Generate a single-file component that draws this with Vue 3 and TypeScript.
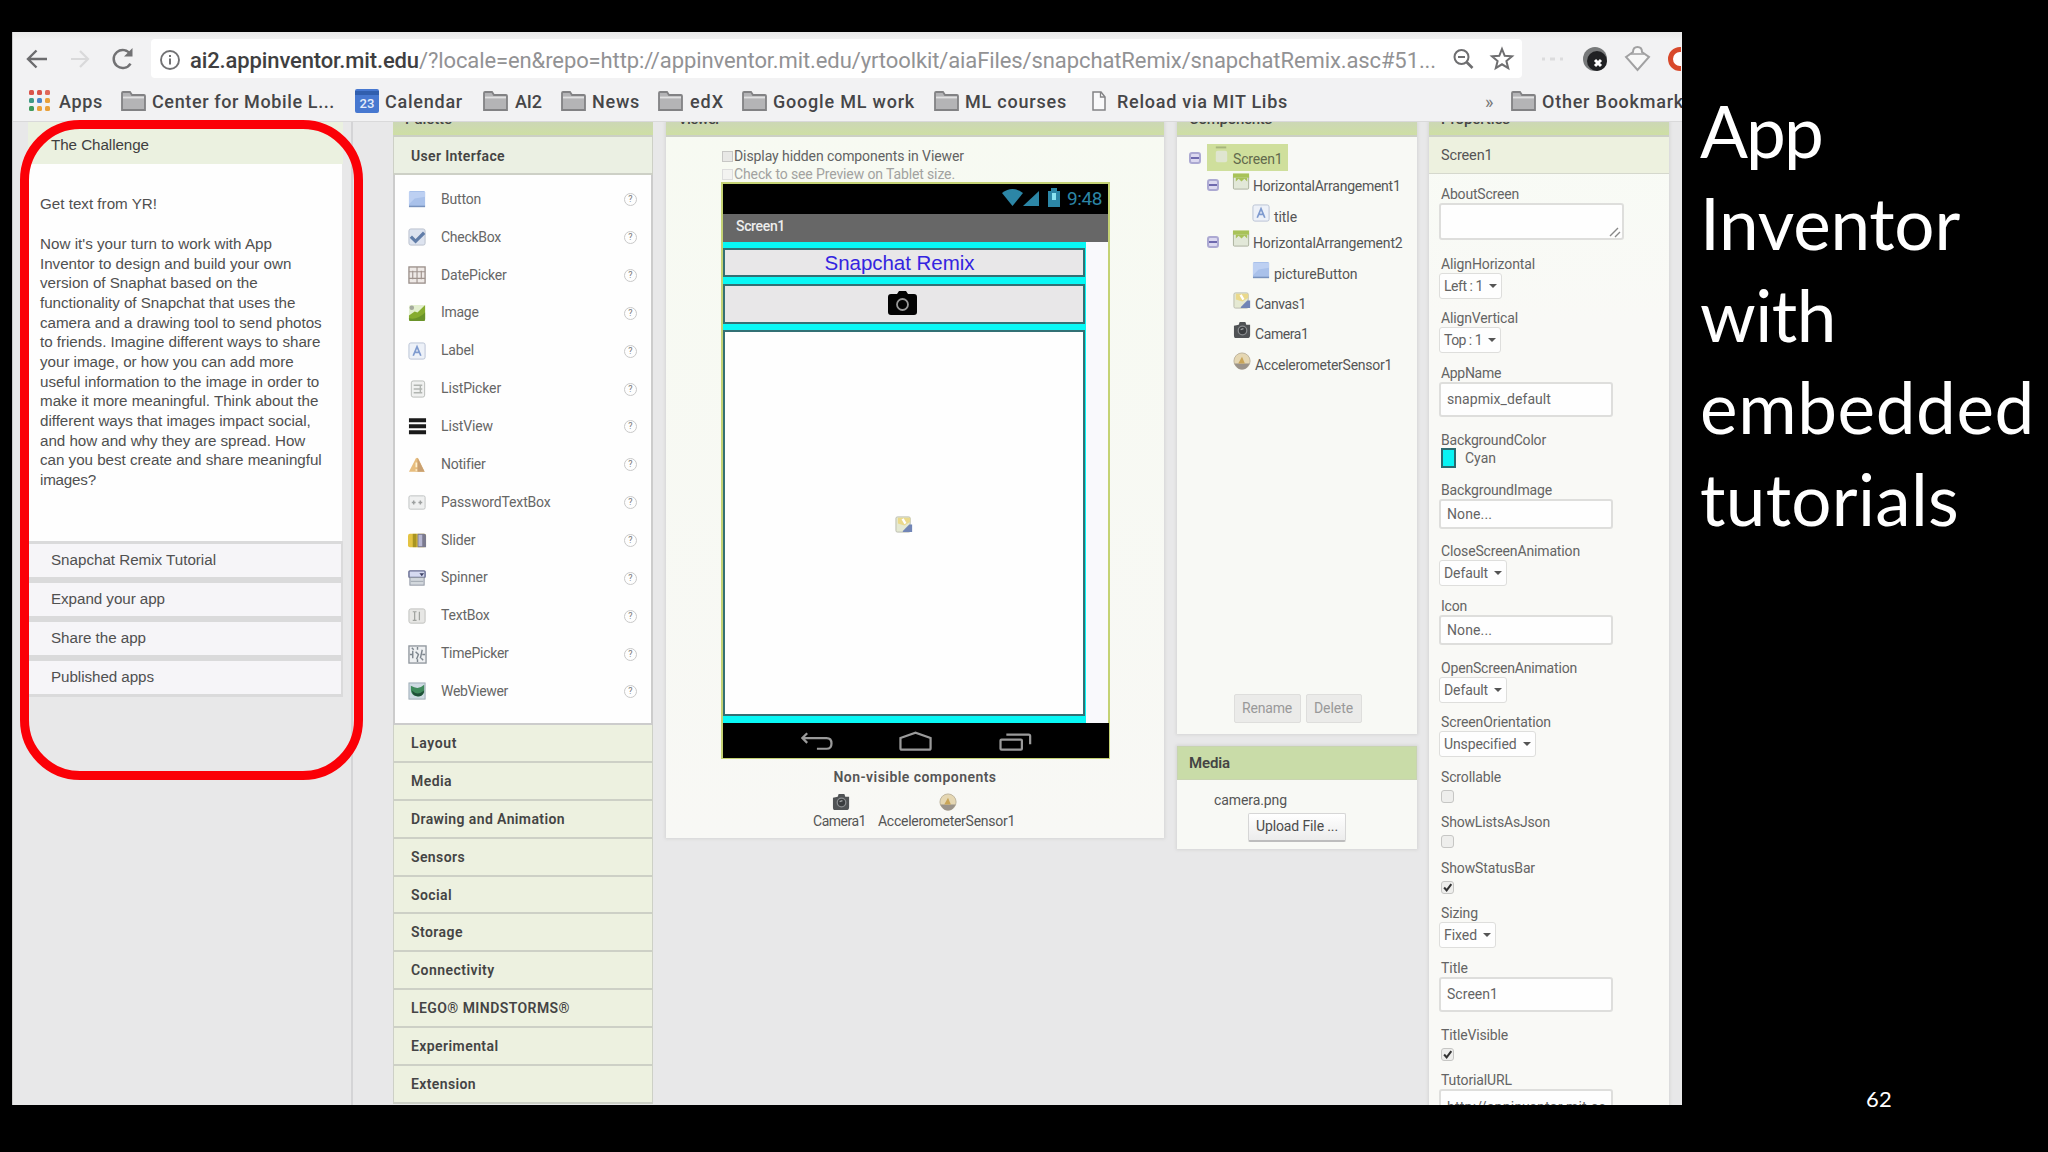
<script setup lang="ts">
import type { Directive } from 'vue'

// Tracks a line of text so that it spans the given number of pixels.
const vFit: Directive<HTMLElement, number> = {
  mounted(el, { value }) {
    const range = document.createRange()
    range.selectNodeContents(el)
    const natural = range.getBoundingClientRect().width
    const count = (el.textContent ?? '').trim().length
    if (value && count) el.style.letterSpacing = `${((value - natural) / count).toFixed(3)}px`
  },
}

interface Bookmark { label: string; kind: 'apps' | 'folder' | 'calendar' | 'page'; x: number; text: number; w: number }
const bookmarks: Bookmark[] = [
  { label: 'Apps', kind: 'apps', x: 16, text: 30, w: 44 },
  { label: 'Center for Mobile L...', kind: 'folder', x: 18, text: 31, w: 183 },
  { label: 'Calendar', kind: 'calendar', x: 20, text: 30, w: 78 },
  { label: 'AI2', kind: 'folder', x: 20, text: 32, w: 27 },
  { label: 'News', kind: 'folder', x: 19, text: 31, w: 48 },
  { label: 'edX', kind: 'folder', x: 18, text: 32, w: 34 },
  { label: 'Google ML work', kind: 'folder', x: 18, text: 31, w: 142 },
  { label: 'ML courses', kind: 'folder', x: 19, text: 31, w: 102 },
  { label: 'Reload via MIT Libs', kind: 'page', x: 25, text: 25, w: 171 },
]
const appDots = ['#d9534a', '#d9534a', '#e0685a', '#3f9a86', '#4a86c8', '#e9a13b', '#3f9a5c', '#e9a13b', '#e9a13b']

const story: [string, number][] = [
  ["Now it's your turn to work with App", 232], ['Inventor to design and build your own', 251.3],
  ['version of Snaphat based on the', 217.7], ['functionality of Snapchat that uses the', 255.3],
  ['camera and a drawing tool to send photos', 281.7], ['to friends. Imagine different ways to share', 280.3],
  ['your image, or how you can add more', 253.7], ['useful information to the image in order to', 279.3],
  ['make it more meaningful. Think about the', 278.3], ['different ways that images impact social,', 270.7],
  ['and how and why they are spread. How', 265.3], ['can you best create and share meaningful', 281.7],
  ['images?', 56],
]
const steps: [string, number][] = [
  ['Snapchat Remix Tutorial', 165], ['Expand your app', 114], ['Share the app', 95], ['Published apps', 103],
]

const icons: Record<string, string> = {
  button: '<rect x="1" y="1" width="17" height="17" rx="1.5" fill="#a9c1ea"/><path d="M1 2h17v5L7 9 1 15z" fill="#bdd0f2"/><path d="M1 17.3h17" stroke="#7892bd" stroke-width="1.6"/>',
  checkbox: '<rect x="1" y="1" width="17" height="17" rx="2" fill="#dde3ef" stroke="#b9c0cc"/><path d="M3 9l5 5 9-9" fill="none" stroke="#617da8" stroke-width="3.4"/>',
  date: '<rect x="1" y="1" width="17" height="17" fill="#eee9e6" stroke="#9a8f8a" stroke-width="1.4"/><path d="M9.5 1v17M1 6h17M1 13h17M5 5v9M14 5v9" stroke="#a0948e" stroke-width="1.2"/>',
  image: '<rect x="1" y="1" width="17" height="17" rx="2" fill="#e3efcf"/><path d="M1 12l6-4 3 1 8-8v15q0 2-2 2H3q-2 0-2-2z" fill="#86ac2f"/><path d="M1 15q9 2 17-6v7q0 2-2 2H3q-2 0-2-2z" fill="#6a932a"/><circle cx="4" cy="4" r="2.4" fill="#a4a99c"/>',
  label: '<rect x="1" y="1" width="17" height="17" rx="2" fill="#edf1f8" stroke="#b8c2d4"/><path d="M5.5 14.500L9.500 5l4 9.500M7 11h5" fill="none" stroke="#7f9bcf" stroke-width="1.8"/>',
  listpicker: '<rect x="3.500" y="1" width="14" height="17" rx="2" fill="#f0f1f0" stroke="#b7bab7"/><path d="M6 5.500h9M6 9.500h9M6 13.500h9M13 5v9" stroke="#b1b5b1" stroke-width="1.5"/>',
  listview: '<path d="M1 3.500h18M1 9.800h18M1 16h18" stroke="#1a1a1a" stroke-width="4.200"/>',
  notifier: '<path d="M9.500 3Q11 3 12 6l5.500 11.500H1L7 6q1-3 2.500-3z" fill="#e7bd7e"/><path d="M10 3l7.500 14.500H10z" fill="#c9a071"/><path d="M8.800 8v5M8.800 15v1.500" stroke="#fff1cf" stroke-width="1.800"/>',
  password: '<rect x="1" y="3" width="17" height="14" rx="1.500" fill="#eff0f0" stroke="#bfc2c2"/><path d="M4 10h4M11 10h4M6 8v4M13 8v4" stroke="#9da0a0" stroke-width="1.500"/>',
  slider: '<rect x="0" y="3" width="19" height="14" rx="2" fill="#e4c343"/><path d="M5 3h4v14H5z" fill="#a99421"/><path d="M10 3h7q2 0 2 2v12h-9z" fill="#7b7a8e"/><path d="M11 4h4v12h-4z" fill="#b7b7d2"/>',
  spinner: '<rect x="1" y="2" width="17" height="7" rx="1" fill="#d6daf0" stroke="#666b91" stroke-width="1.500"/><rect x="2" y="9" width="15" height="8" fill="#d3d8dd" stroke="#8e95a2"/><path d="M12 4.500h5l-2.500 3z" fill="#3e4366"/><path d="M3 13h13" stroke="#9da4ad"/>',
  textbox: '<rect x="1" y="2" width="17" height="15" rx="2" fill="#e7e7e5" stroke="#bfc0bd"/><path d="M5 5h4M7 5v9M5 14h4M12 5v9" stroke="#a0a39f" stroke-width="1.300"/>',
  time: '<rect x="1" y="1" width="18" height="18" fill="#eef0f2" stroke="#8f969d" stroke-width="1.400"/><path d="M10 2v3M10 15v3M2 10h3M15 10h3M5 6v8M8 7l3 3-2 5M15 5l-2 9M4 3l2 2M16 16l-2-2" stroke="#7d858d" stroke-width="1.500" fill="none"/>',
  web: '<rect x="1" y="1" width="17" height="17" fill="#cfdbe3" stroke="#9cabb5"/><path d="M3 4q8 5 14-1v8q-3 5-8 4-6-1-6-7z" fill="#3f8a5c"/><path d="M4 9q6 6 13 0-1 7-7 6-5 0-6-6z" fill="#1f5038"/>',
  horizontal: '<rect x="1.500" y="4" width="16" height="14" rx="1" fill="#e2e8d8" stroke="#aab09c"/><path d="M1 6V1.500h17V6z" fill="#a8c258"/><path d="M4 6v4l3-3 3 3 3-3 3 3V6z" fill="#a8c258"/>',
  canvas: '<rect x="1" y="2" width="15" height="16" rx="1.500" fill="#e5e9d2" stroke="#b9bcae"/><path d="M3 3h13v4l-6 4-7-2z" fill="#ead98b"/><path d="M8 4l3 5" stroke="#fff" stroke-width="2.500"/><path d="M9 16l6-6h3v8H8z" fill="#7185b6"/>',
  camera: '<path d="M1 5l5-1 1-3h6l1 3h4v11q0 3-3 3H3q-2 0-2-3z" fill="#505355"/><circle cx="10" cy="10" r="4.500" fill="#3a3d3f" stroke="#8a8d8f" stroke-width="1.300"/><path d="M8 9l3-1" stroke="#a5a8aa" stroke-width="1.400"/>',
  accel: '<circle cx="9.500" cy="9.500" r="8.500" fill="#e5d7b3" stroke="#bdb39d"/><path d="M1.500 12h16q-3 6.500-8 6.500t-8-6.500z" fill="#9a938a"/><path d="M9.500 5l3 7h-7z" fill="#c9a558"/>',
  screen: '<path d="M4 1.500h11" stroke="#a6b57c" stroke-width="2"/><rect x="4" y="5" width="12" height="12" rx="2" fill="#dfe5d0"/>',
}

const palette: [string, string, number][] = [
  ['button', 'Button', 40], ['checkbox', 'CheckBox', 60], ['date', 'DatePicker', 65.6], ['image', 'Image', 37.6],
  ['label', 'Label', 33], ['listpicker', 'ListPicker', 60], ['listview', 'ListView', 52], ['notifier', 'Notifier', 44],
  ['password', 'PasswordTextBox', 109.6], ['slider', 'Slider', 34.5], ['spinner', 'Spinner', 46.6],
  ['textbox', 'TextBox', 48.6], ['time', 'TimePicker', 67.6], ['web', 'WebViewer', 67],
]
const categories: [string, number][] = [
  ['Layout', 46], ['Media', 41], ['Drawing and Animation', 154], ['Sensors', 54], ['Social', 41], ['Storage', 52],
  ['Connectivity', 83.6], ['LEGO® MINDSTORMS®', 159], ['Experimental', 87.5], ['Extension', 65],
]

interface Node { icon: string; label: string; w: number; depth: 'd0' | 'd1' | 'd2' | 'leaf'; toggle?: boolean }
const tree: Node[] = [
  { icon: 'screen', label: 'Screen1', w: 49.5, depth: 'd0', toggle: true },
  { icon: 'horizontal', label: 'HorizontalArrangement1', w: 147.5, depth: 'd1', toggle: true },
  { icon: 'label', label: 'title', w: 23, depth: 'd2' },
  { icon: 'horizontal', label: 'HorizontalArrangement2', w: 149.5, depth: 'd1', toggle: true },
  { icon: 'button', label: 'pictureButton', w: 83.5, depth: 'd2' },
  { icon: 'canvas', label: 'Canvas1', w: 51, depth: 'leaf' },
  { icon: 'camera', label: 'Camera1', w: 53.5, depth: 'leaf' },
  { icon: 'accel', label: 'AccelerometerSensor1', w: 137, depth: 'leaf' },
]

interface Prop { name: string; w: number; kind: 'area' | 'select' | 'input' | 'color' | 'picker' | 'check'; value?: string; vw?: number; on?: boolean }
const props: Prop[] = [
  { name: 'AboutScreen', w: 78, kind: 'area' },
  { name: 'AlignHorizontal', w: 94, kind: 'select', value: 'Left : 1', vw: 39 },
  { name: 'AlignVertical', w: 77, kind: 'select', value: 'Top : 1', vw: 38 },
  { name: 'AppName', w: 60, kind: 'input', value: 'snapmix_default', vw: 104 },
  { name: 'BackgroundColor', w: 105, kind: 'color', value: 'Cyan', vw: 31 },
  { name: 'BackgroundImage', w: 111, kind: 'picker', value: 'None...', vw: 45 },
  { name: 'CloseScreenAnimation', w: 139, kind: 'select', value: 'Default', vw: 44 },
  { name: 'Icon', w: 26, kind: 'picker', value: 'None...', vw: 45 },
  { name: 'OpenScreenAnimation', w: 136, kind: 'select', value: 'Default', vw: 44 },
  { name: 'ScreenOrientation', w: 110, kind: 'select', value: 'Unspecified', vw: 72 },
  { name: 'Scrollable', w: 60, kind: 'check' },
  { name: 'ShowListsAsJson', w: 109, kind: 'check' },
  { name: 'ShowStatusBar', w: 94, kind: 'check', on: true },
  { name: 'Sizing', w: 37, kind: 'select', value: 'Fixed', vw: 33 },
  { name: 'Title', w: 27, kind: 'input', value: 'Screen1', vw: 51 },
  { name: 'TitleVisible', w: 67, kind: 'check', on: true },
  { name: 'TutorialURL', w: 71, kind: 'input', value: 'http://appinventor.mit.ec', vw: 159 },
]
const headline: [string, number][] = [['App', 122], ['Inventor', 260], ['with', 136], ['embedded', 335], ['tutorials', 259]]
</script>

<template>
  <div class="slide">
    <div class="browser">
      <header class="toolbar">
        <svg class="nav" viewBox="0 0 130 30" fill="none">
          <path d="M35 15H17M24.500 6.500L16 15l8.500 8.500" stroke="#6c6c6e" stroke-width="2.400" />
          <path d="M59 15h17M68 7l8 8-8 8" stroke="#d9d9da" stroke-width="2.200" />
          <path d="M118.500 19.500a9 9 0 1 1 0-9" stroke="#727274" stroke-width="2.500" />
          <path d="M120.500 4v8.500h-8.500z" fill="#727274" />
        </svg>
        <div class="address">
          <svg class="info" viewBox="0 0 22 22" fill="none" stroke="#727274"><circle cx="11" cy="11" r="9" stroke-width="1.900" /><path d="M11 9.500v6M11 6v2" stroke-width="2" /></svg>
          <span class="url"><b v-fit="229">ai2.appinventor.mit.edu</b><span v-fit="1017">/?locale=en&amp;repo=http://appinventor.mit.edu/yrtoolkit/aiaFiles/snapchatRemix/snapchatRemix.asc#51...</span></span>
          <svg class="tools" viewBox="0 0 64 26" fill="none" stroke="#6e6e70" stroke-width="2"><circle cx="9.500" cy="11" r="7" /><path d="M14.500 16l6 6" stroke-width="2.600" /><path d="M6 11h7" /><path d="M50 3l2.700 6.800 7.300.5-5.600 4.700 1.800 7.200L50 18.300l-6.200 3.900 1.800-7.200L40 10.300l7.300-.5z" /></svg>
        </div>
        <svg class="ext" viewBox="0 0 159 40">
          <path d="M20 20h3M28 20h5M38 20h3" stroke="#dcdcdd" stroke-width="3" />
          <circle cx="73" cy="20" r="12" fill="#77797a" /><circle cx="75" cy="22" r="10" fill="#202123" /><path d="M73 21l6 6M79 21l-6 6" stroke="#fff" stroke-width="3" />
          <path d="M104 18l7-5q0-5 4.500-5t4.500 5l7 5-11.500 13z" fill="#f8f8f8" stroke="#a1a1a2" stroke-width="2" /><path d="M109 15h13" stroke="#a1a1a2" stroke-width="1.500" />
          <circle cx="158" cy="20" r="9.500" fill="#fff" stroke="#d8492b" stroke-width="5" />
        </svg>
      </header>
      <nav class="bookmarks">
        <div v-for="b in bookmarks" :key="b.label" class="bm" :style="{ marginLeft: b.x + 'px' }">
          <span class="bmi" :style="{ width: b.text + 'px' }">
            <svg v-if="b.kind === 'apps'" width="22" height="22" viewBox="0 0 22 22"><rect v-for="(c, i) in appDots" :key="i" :x="(i % 3) * 8" :y="Math.floor(i / 3) * 8" width="5" height="5" rx="1.500" :fill="c" /></svg>
            <svg v-else-if="b.kind === 'folder'" width="25" height="20" viewBox="0 0 25 20"><path d="M1 19V2q0-1 1-1h7l2 3h12q1 0 1 1v14z" fill="#b4b4b6" stroke="#828284" stroke-width="1.800" /><path d="M2 6.500h21" stroke="#e1e1e2" stroke-width="1.800" /></svg>
            <svg v-else-if="b.kind === 'calendar'" width="24" height="24" viewBox="0 0 24 24"><rect width="24" height="24" rx="2" fill="#4778d0" /><path d="M0 2h24v4H0z" fill="#315fae" /><text x="12" y="18.500" text-anchor="middle" font-family="Roboto, sans-serif" font-size="13" fill="#e4ecfa">23</text></svg>
            <svg v-else width="14" height="20" viewBox="0 0 14 20"><path d="M1 1h8l4 5v13H1z" fill="#f9f9fa" stroke="#838385" stroke-width="1.500" /><path d="M8.500 1v5H13" fill="none" stroke="#838385" stroke-width="1.300" /></svg>
          </span>
          <span class="bmt" :style="{ width: b.w + 'px' }"><span v-fit="b.w">{{ b.label }}</span></span>
        </div>
        <span class="more">»</span>
        <svg width="25" height="20" viewBox="0 0 25 20"><path d="M1 19V2q0-1 1-1h7l2 3h12q1 0 1 1v14z" fill="#b4b4b6" stroke="#828284" stroke-width="1.800" /><path d="M2 6.500h21" stroke="#e1e1e2" stroke-width="1.800" /></svg>
        <span class="other" v-fit="152">Other Bookmarks</span>
      </nav>

      <main class="page">
        <aside class="tutorial">
          <div class="chead"><span v-fit="98">The Challenge</span></div>
          <div class="cbody">
            <p><span v-fit="117">Get text from YR!</span></p>
            <p><template v-for="s in story" :key="s[0]"><span v-fit="s[1]" class="line">{{ s[0] }}</span></template></p>
          </div>
          <div v-for="s in steps" :key="s[0]" class="step"><span v-fit="s[1]">{{ s[0] }}</span></div>
        </aside>

        <section class="palette">
          <div class="phead"><b v-fit="47">Palette</b></div>
          <div class="cat first"><b v-fit="94">User Interface</b></div>
          <ul class="items">
            <li v-for="p in palette" :key="p[1]">
              <svg class="ico" viewBox="0 0 20 20" v-html="icons[p[0]]"></svg>
              <span v-fit="p[2]">{{ p[1] }}</span>
              <i>?</i>
            </li>
          </ul>
          <div v-for="c in categories" :key="c[0]" class="cat"><b v-fit="c[1]">{{ c[0] }}</b></div>
        </section>

        <section class="viewer panel">
          <div class="phead"><b v-fit="42">Viewer</b></div>
          <div class="opt"><span class="box"></span><span v-fit="230">Display hidden components in Viewer</span></div>
          <div class="opt dim"><span class="box"></span><span v-fit="221">Check to see Preview on Tablet size.</span></div>
          <div class="phone">
            <div class="status">
              <svg width="60" height="22" viewBox="0 0 60 22" fill="#2c86a6"><path d="M0 6q10.500-8 21 0L10.500 19z" /><path d="M21 19L37 4v15z" /><path d="M46 4h3V1h6v3h3v16H46z" /><path d="M50 6h4v7h-4z" fill="#8be4f2" /></svg>
              <span v-fit="35">9:48</span>
            </div>
            <div class="title"><span v-fit="49">Screen1</span></div>
            <div class="form">
              <div class="arr one"><span v-fit="150">Snapchat Remix</span></div>
              <div class="arr two">
                <svg width="31" height="26" viewBox="0 0 31 26"><path d="M4 4h6l2-3h7l2 3h6q3 0 3 3v15q0 3-3 3H4q-3 0-3-3V7q0-3 3-3z" fill="#030303" /><circle cx="15.500" cy="14.500" r="5.500" fill="none" stroke="#999" stroke-width="1.800" /></svg>
              </div>
              <div class="arr canvas"><svg class="ico" viewBox="0 0 20 20" v-html="icons.canvas"></svg></div>
            </div>
            <div class="keys">
              <svg viewBox="0 0 386 35" fill="none" stroke="#9a9a9a" stroke-width="2.300"><path d="M81 10.500l-5 5 5 5M77 15.500h24q5 0 5 5.500t-5 5.500H91" /><path d="M177 15.500L192.500 10 208 15.500V26q0 1.500-1.500 1.500h-28Q177 27.500 177 26z" /><rect x="280" y="17" width="22" height="10.500" rx="1" /><path d="M286 12h23q1.500 0 1.500 1.500V22" /></svg>
            </div>
          </div>
          <div class="nonvis"><b v-fit="163">Non-visible components</b></div>
          <div class="nv">
            <div class="nvi cam"><svg class="ico" viewBox="0 0 20 20" v-html="icons.camera"></svg><span v-fit="53">Camera1</span></div>
            <div class="nvi acc"><svg class="ico" viewBox="0 0 20 20" v-html="icons.accel"></svg><span v-fit="137">AccelerometerSensor1</span></div>
          </div>
        </section>

        <div class="column">
          <section class="components panel">
            <div class="phead"><b v-fit="83">Components</b></div>
            <div class="tree">
              <div v-for="n in tree" :key="n.label" class="node" :class="n.depth">
                <span v-if="n.toggle" class="tg"></span>
                <span class="pill"><svg class="ico" viewBox="0 0 20 20" v-html="icons[n.icon]"></svg><span class="name" v-fit="n.w">{{ n.label }}</span></span>
              </div>
            </div>
            <div class="acts"><span class="btn rn"><span v-fit="50">Rename</span></span><span class="btn dl"><span v-fit="39">Delete</span></span></div>
          </section>
          <section class="media panel">
            <div class="mhead"><b v-fit="41">Media</b></div>
            <div class="file"><span v-fit="73">camera.png</span></div>
            <div class="upload"><span v-fit="82">Upload File ...</span></div>
          </section>
        </div>

        <section class="properties panel">
          <div class="phead"><b v-fit="69">Properties</b></div>
          <div class="phsub"><span v-fit="51.500">Screen1</span></div>
          <div v-for="p in props" :key="p.name" class="prop" :class="p.kind">
            <div class="pl"><span v-fit="p.w">{{ p.name }}</span></div>
            <div v-if="p.kind === 'area'" class="ctl"><svg width="14" height="12" viewBox="0 0 14 12"><path d="M2 10l8-8M7 11l5-5" stroke="#888" stroke-width="1.400" /></svg></div>
            <div v-else-if="p.kind === 'select'" class="ctl"><span v-fit="p.vw ?? 0">{{ p.value }}</span><em></em></div>
            <div v-else-if="p.kind === 'color'" class="ctl"><u></u><span v-fit="p.vw ?? 0">{{ p.value }}</span></div>
            <div v-else-if="p.kind === 'check'" class="ctl"><svg v-if="p.on" width="13" height="13" viewBox="0 0 13 13"><path d="M2.500 6.500l3 3.500L11 2.500" fill="none" stroke="#333" stroke-width="2.400" /></svg></div>
            <div v-else class="ctl"><span v-fit="p.vw ?? 0">{{ p.value }}</span></div>
          </div>
        </section>
      </main>
    </div>
    <div class="caption">
      <h1><span v-for="h in headline" :key="h[0]" v-fit="h[1]">{{ h[0] }}</span></h1>
      <div class="num"><span v-fit="26">62</span></div>
    </div>
    <div class="marker"></div>
  </div>
</template>

<style>
html, body { margin: 0; background: #000; overflow: hidden; }
</style>
<style scoped>
* { box-sizing: border-box; }
.slide { position: relative; width: 2048px; height: 1152px; background: #000; display: flex; padding: 32px 0 0 12px; overflow: hidden; font-family: Roboto, "Liberation Sans", sans-serif; font-size: 14px; color: #555; white-space: nowrap; }
.browser { width: 1670px; height: 1073px; flex: none; overflow: hidden; background: #e8e8e9; border-left: 1px solid #ccc; }
.toolbar { height: 50px; background: linear-gradient(#e9e9e9 0, #eee 5px, #f2f2f3 8px); display: flex; padding-top: 7px; }
.nav { width: 130px; height: 30px; margin: 5px 9px 0 -1px; flex: none; }
.address { width: 1371px; height: 39px; background: #fff; border-radius: 4px; display: flex; align-items: center; flex: none; }
.info { width: 22px; height: 22px; margin: 2px 9px 0 8px; flex: none; }
.url { width: 1262px; font-size: 22px; color: #929294; flex: none; overflow: hidden; padding-top: 3px; }
.url b { font-weight: 500; color: #3f3f41; }
.tools { width: 64px; height: 26px; margin-top: 1px; }
.ext { width: 159px; height: 40px; flex: none; }
.bookmarks { height: 40px; background: #f2f2f3; border-bottom: 1px solid #d9d9da; display: flex; align-items: center; font-size: 18px; font-weight: 500; color: #464648; padding-bottom: 1px; }
.bm { display: flex; align-items: center; flex: none; }
.bmi { display: flex; flex: none; }
.bmt { flex: none; display: block; }
.bookmarks > svg { flex: none; }
.more { width: 26px; margin-left: 197px; font-weight: 400; color: #777; flex: none; }
.other { margin-left: 6px; flex: none; }
.page { height: 983px; display: flex; align-items: flex-start; overflow: hidden; }
.tutorial { width: 340px; height: 983px; padding-left: 15px; border-right: 2px solid #d4d4d6; font-family: "Liberation Sans", Arial, sans-serif; font-size: 15.200px; flex: none; color: #505050; }
.chead { width: 315px; height: 42px; background: #ebf1e0; padding: 14px 0 0 23px; line-height: 18px; color: #3f3f3f; }
.cbody { width: 314px; height: 377px; background: #fefefe; padding: 30px 0 0 12px; line-height: 19.670px; }
.cbody p { margin: 0 0 20.300px; }
.line { display: block; }
.step { width: 315px; height: 38.900px; background: #f6f5f8; border: solid #dadadb; border-width: 3px 2px 3px 1px; padding-left: 22px; line-height: 32px; }
.phead { height: 15px; background: linear-gradient(#ccd7b5, #cedfa4); border-bottom: 2px solid #ccd0c5; padding-left: 12px; overflow: hidden; font-size: 15px; flex: none; }
.phead b { display: block; margin-top: -12px; line-height: 18px; font-weight: 500; color: #444; }
.palette { width: 260px; margin-left: 40px; flex: none; }
.cat { height: 37.900px; background: #edf1e0; border: solid #cdd0c6; border-width: 0 1px 2px; padding-left: 17px; line-height: 37px; color: #444; }
.cat.first { height: 38px; background: #ebf0e3; line-height: 38px; }
.cat b { font-weight: 600; }
.items { margin: 0; padding: 6px 0 0; list-style: none; height: 550px; background: #fefefe; border: 2px solid #ccc; border-top: 0; }
.items li { height: 37.850px; display: flex; align-items: center; padding-left: 13px; color: #666; font-size: 14px; }
.ico { width: 19px; height: 19px; flex: none; }
.items .ico { margin-right: 14px; }
.items li span { width: 183px; margin-top: -2px; }
.items i { width: 13px; height: 13px; border: 1px solid #c9c9c9; border-radius: 7px; font: 9px/11px Roboto, sans-serif; text-align: center; color: #777; }
.panel { background: #f8f9f5; box-shadow: 0 0 3px 1px #d5d5d5; flex: none; }
.viewer { width: 498px; height: 716px; margin-left: 13px; background: linear-gradient(#f7faf2, #f8f8f5); }
.opt { display: flex; height: 18px; align-items: center; padding-left: 56px; color: #626262; }
.opt:nth-child(2) { margin-top: 10px; }
.box { width: 11px; height: 11px; border: 1px solid #c7c7c5; background: #e8e8e6; margin-right: 1px; }
.dim { color: #a2a2a0; }
.dim .box { border-color: #ddd; background: #f3f3f1; }
.phone { width: 389px; height: 577px; margin: -1px 0 0 55px; border: 2px solid #c4d274; background: #f9f9fc; }
.status { height: 30px; background: #000; display: flex; justify-content: flex-end; align-items: center; padding-right: 7px; font-size: 19px; color: #2c86a6; }
.status span { width: 34px; margin: -2px 0 0 5px; }
.status svg { margin-top: -2px; }
.title { height: 28px; background: #676767; color: #ededed; font-weight: 500; padding-left: 13px; line-height: 25px; }
.form { width: 363px; height: 481px; background: #08f8f5; padding-top: 6px; }
.arr { width: 362px; border: 2px solid #337074; background: #e8e7e8; display: flex; justify-content: center; align-items: center; }
.one { height: 29px; margin-bottom: 7px; font: 20.500px "Liberation Sans", Arial, sans-serif; color: #3424e0; }
.one span { margin-left: -9px; }
.two { height: 40px; margin-bottom: 6px; }
.two svg { margin: -3px 0 0 -3px; }
.canvas { height: 386px; background: #fefefe; }
.canvas svg { margin-top: 3px; }
.keys { height: 35px; margin-right: -1px; background: #000; }
.keys svg { display: block; width: 386px; height: 34px; }
.nonvis { padding: 10px 0 0 167.500px; line-height: 17px; color: #555; }
.nonvis b { font-weight: 600; }
.nv { display: flex; padding-top: 7px; }
.nvi { display: flex; flex-direction: column; align-items: center; line-height: 18px; }
.nvi svg { margin-left: 4px; }
.nvi span { width: 100%; }
.cam { width: 53px; margin-left: 147px; }
.acc { width: 137px; margin-left: 12px; }
.column { width: 240px; margin-left: 13px; flex: none; }
.components { height: 612px; display: flex; flex-direction: column; }
.tree { padding-top: 7px; height: 557px; }
.node { display: flex; align-items: center; height: 30.500px; }
.pill { display: flex; align-items: center; }
.pill .name { padding-top: 7px; margin-left: 3px; line-height: 16px; }
.tg { width: 12px; height: 12px; border: 2px solid #aca9d2; border-radius: 3px; background: linear-gradient(#dcd9f0 3px, #6e69ae 3px 5px, #dcd9f0 5px); }
.d0 { height: 27px; padding-left: 12px; }
.d0 .pill { height: 27px; width: 81px; margin-left: 6px; padding-left: 5px; background: #cfdf9c; }
.d0 .name { margin-left: 2px; padding-top: 3px; color: #626a4c; }
.d0 .ico { margin-top: -4px; }
.d1 { height: 27.500px; padding-left: 30px; }
.d1 .pill { margin: -6px 0 0 13px; }
.d1 .name { margin-left: 2px; padding-top: 9px; }
.d2 { height: 29.500px; padding-left: 75px; }
.leaf { padding-left: 56px; }
.acts { display: flex; padding-left: 57px; font-size: 14px; }
.btn { height: 29px; border: 1px solid #dededc; background: #ebebe9; border-radius: 2px; color: #999; line-height: 27px; padding-left: 7px; }
.rn { width: 67px; margin-right: 5px; }
.dl { width: 56px; }
.media { margin-top: 12px; height: 103px; }
.mhead { height: 34px; background: #c9dca8; border: 1px solid #c8d4b0; padding-left: 11px; line-height: 33px; color: #444; font-size: 15px; }
.mhead b { font-weight: 600; }
.file { padding: 11px 0 0 37px; line-height: 18px; }
.upload { margin: 4px 0 0 71px; width: 98px; height: 29px; border: 1px solid #d6d6d6; border-bottom: 2px solid #bdbdbd; border-radius: 2px; background: linear-gradient(#fff, #ececec); padding-left: 7px; line-height: 25px; color: #4c4c4c; }
.properties { width: 240px; height: 990px; margin-left: 12px; background: linear-gradient(#f8fbf5, #f9f9f6 200px); }
.phsub { height: 37px; background: #edf1df; border-bottom: 1px solid #d5d8cd; padding-left: 12px; line-height: 38px; margin-bottom: 11px; font-size: 14.500px; }
.prop { height: 54.600px; padding-left: 10px; color: #646464; }
.pl { height: 18px; line-height: 18px; padding-left: 2px; }
.ctl { background: #fefefe; border: 2px solid #dededc; border-radius: 3px; width: 174px; height: 35px; display: flex; align-items: center; padding-left: 6px; }
.area { height: 69.600px; }
.area .ctl { width: 185px; height: 37px; align-items: flex-end; justify-content: flex-end; }
.select .ctl { width: max-content; height: 26px; padding: 0 4px 0 4px; border-width: 1px; }
.select em { width: 0; height: 0; border: 4px solid transparent; border-top-color: #555; border-bottom: 0; margin-left: 6px; }
.input { height: 67px; }
.picker { height: 61.700px; }
.picker .ctl { height: 30px; }
.color { height: 50px; }
.color .ctl { background: none; border: 0; height: 20px; padding-left: 2px; margin-top: -1px; }
.color u { width: 15px; height: 20px; border: 2px solid #2b6a70; background: #08f4f4; margin-right: 9px; }
.check { height: 45.400px; }
.check .ctl { width: 13px; height: 13px; padding: 0; margin: 4px 0 0 2px; border: 1px solid #c6c6c4; background: #eeeeec; justify-content: center; }
.caption { width: 366px; height: 1120px; display: flex; flex-direction: column; justify-content: space-between; color: #fff; font-family: Lato, sans-serif; }
h1 { margin: 53px 0 0 18px; font-size: 71px; line-height: 92px; font-weight: 400; }
h1 span { display: block; }
.num { padding: 0 0 41px 184px; font-size: 22px; line-height: 24px; }
.marker { position: absolute; left: 20px; top: 120px; width: 343px; height: 660px; border: 9px solid #fb0007; border-radius: 60px; }
</style>
